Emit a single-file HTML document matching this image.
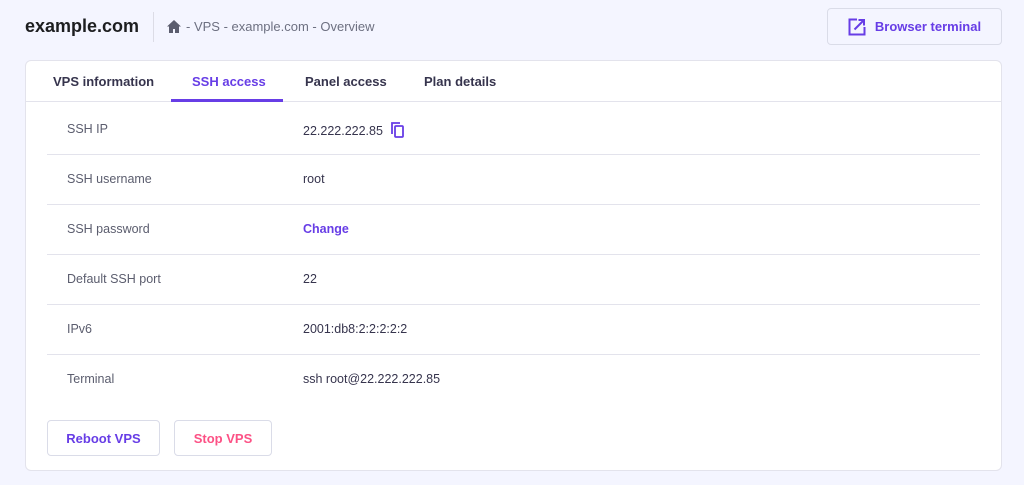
<!DOCTYPE html>
<html><head><style>
*{margin:0;padding:0;box-sizing:border-box}
body{width:1024px;height:485px;background:#f4f5ff;font-family:"Liberation Sans",sans-serif;position:relative;overflow:hidden;color:#2f1c6a}
.abs{position:absolute}
.title{left:25px;top:16px;font-size:18px;font-weight:bold;color:#1d1e20}
.sep{left:153px;top:12px;width:1px;height:30px;background:#dcdce6}
.bc{left:167px;top:19px;font-size:13px;color:#6d7081;display:flex;align-items:center;gap:5px}
.bt{left:827px;top:8px;width:175px;height:37px;border:1px solid #dadce8;border-radius:4px;display:flex;align-items:center;justify-content:center;gap:9px;color:#673de6;font-weight:bold;font-size:13px}
.card{left:25px;top:60px;width:977px;height:411px;background:#fff;border:1px solid #e3e3ec;border-radius:6px}
.tabs{left:25px;top:60px;width:977px;height:42px;border-bottom:1px solid #e3e3ec}
.tab{position:absolute;top:14px;font-size:13px;font-weight:bold;color:#36344d}
.ul{left:171px;top:99px;width:112px;height:3px;background:#673de6}
.row{left:47px;width:933px;height:50px;border-bottom:1px solid #e3e3ec;font-size:12.5px;color:#36344d}
.row .l{position:absolute;left:20px;top:17px;color:#5b5d6e}
.row .v{position:absolute;left:256px;top:17px}
.btn{top:420px;height:36px;border:1px solid #dadce8;border-radius:4px;font-size:13px;font-weight:bold;display:flex;align-items:center;justify-content:center}
</style></head><body>
<div class="abs title">example.com</div>
<div class="abs sep"></div>
<div class="abs bc"><svg width="14" height="13" viewBox="0 0 14 13"><path d="M7 0L0 6.5h2V13h4V9h2v4h4V6.5h2z" fill="#5b5d6e"/></svg><span>- VPS - example.com - Overview</span></div>
<div class="abs bt"><svg width="18" height="18" viewBox="0 0 18 18" fill="none" stroke="#673de6" stroke-width="2"><path d="M9 1.5H1.5v15h15V9"/><path d="M6.5 11.5L15.5 2.5M10.5 2h5.5v5.5"/></svg>Browser terminal</div>
<div class="abs card"></div>
<div class="abs tabs">
<span class="tab" style="left:28px">VPS information</span>
<span class="tab" style="left:167px;color:#673de6">SSH access</span>
<span class="tab" style="left:280px">Panel access</span>
<span class="tab" style="left:399px">Plan details</span>
</div>
<div class="abs ul"></div>
<div class="abs row" style="top:105px"><span class="l">SSH IP</span><span class="v">22.222.222.85 <svg width="14" height="16" viewBox="0 0 14 16" style="vertical-align:-3px;margin-left:5px" fill="none" stroke="#673de6" stroke-width="1.8"><path d="M1 12V1h8"/><rect x="4" y="4" width="8" height="11" rx="1"/></svg></span></div>
<div class="abs row" style="top:155px"><span class="l">SSH username</span><span class="v">root</span></div>
<div class="abs row" style="top:205px"><span class="l">SSH password</span><span class="v" style="color:#673de6;font-weight:bold">Change</span></div>
<div class="abs row" style="top:255px"><span class="l">Default SSH port</span><span class="v">22</span></div>
<div class="abs row" style="top:305px"><span class="l">IPv6</span><span class="v">2001:db8:2:2:2:2:2</span></div>
<div class="abs row" style="top:355px;border-bottom:none"><span class="l">Terminal</span><span class="v">ssh root@22.222.222.85</span></div>
<div class="abs btn" style="left:47px;width:113px;color:#673de6">Reboot VPS</div>
<div class="abs btn" style="left:174px;width:98px;color:#fc5185">Stop VPS</div>
</body></html>
